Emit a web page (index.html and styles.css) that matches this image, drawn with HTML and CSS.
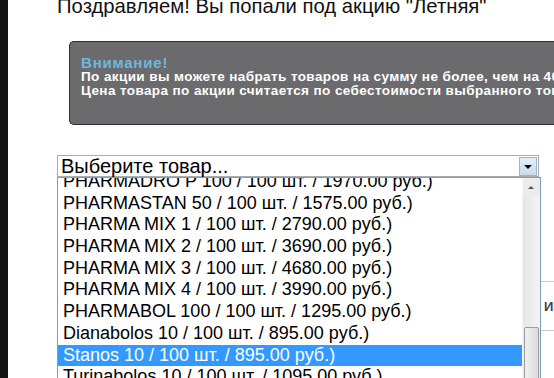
FILE: index.html
```html
<!DOCTYPE html>
<html lang="ru">
<head>
  <meta charset="UTF-8">
  <title>Акция "Летняя"</title>
  <link rel="stylesheet" href="styles.css">
</head>
<body>
  <div class="page">
    <div class="side"></div>
    <main class="main">
      <h1 class="title">Поздравляем! Вы попали под акцию "Летняя"</h1>

      <div class="notice">
        <div class="notice-head">Внимание!</div>
        <p>По акции вы можете набрать товаров на сумму не более, чем на 4000 руб.</p>
        <p>Цена товара по акции считается по себестоимости выбранного товара.</p>
      </div>

      <div class="picker">
        <div class="select">
          <span>Выберите товар...</span>
          <span class="arrow"></span>
        </div>
        <div class="list">
          <ul class="items">
            <li>PHARMADRO P 100 / 100 шт. / 1970.00 руб.)</li>
            <li>PHARMASTAN 50 / 100 шт. / 1575.00 руб.)</li>
            <li>PHARMA MIX 1 / 100 шт. / 2790.00 руб.)</li>
            <li>PHARMA MIX 2 / 100 шт. / 3690.00 руб.)</li>
            <li>PHARMA MIX 3 / 100 шт. / 4680.00 руб.)</li>
            <li>PHARMA MIX 4 / 100 шт. / 3990.00 руб.)</li>
            <li>PHARMABOL 100 / 100 шт. / 1295.00 руб.)</li>
            <li>Dianabolos 10 / 100 шт. / 895.00 руб.)</li>
            <li class="active">Stanos 10 / 100 шт. / 895.00 руб.)</li>
            <li>Turinabolos 10 / 100 шт. / 1095.00 руб.)</li>
          </ul>
          <div class="scroll">
            <div class="scroll-up"></div>
            <div class="scroll-track"></div>
            <div class="scroll-thumb"></div>
          </div>
        </div>
      </div>

      <table class="cart">
        <tr>
          <td class="cart-name">Товар</td>
          <td class="cart-col">Имя</td>
        </tr>
        <tr>
          <td class="cart-name"></td>
          <td class="cart-col"></td>
        </tr>
      </table>
    </main>
  </div>
</body>
</html>
```

FILE: styles.css
```css
/* основа */
body {
  margin: 0;
  background: #ffffff;
  font-family: 'Liberation Sans', Arial, sans-serif;
  overflow: hidden;
}

.page {
  display: flex;
  height: 378px;
  overflow: hidden;
}

.side {
  width: 8px;
  flex-shrink: 0;
  background: #141414;
}

.main {
  flex: 1;
  padding-left: 49px;
  white-space: nowrap;
  overflow: hidden;
}

.title {
  margin: -6px 0 0;
  font-size: 20.3px;
  line-height: 24px;
  font-weight: normal;
  color: #111;
}

/* блок внимания */
.notice {
  margin: 23px 0 0 12px;
  height: 84px;
  box-sizing: border-box;
  padding: 14px 11px;
  background: #6b6b6d;
  border: 1px solid #2e2e2e;
  border-radius: 5px 0 0 5px;
  border-right: none;
  color: #ffffff;
  font-size: 13.5px;
  font-weight: bold;
  line-height: 14px;
}

.notice-head {
  color: #6cb8df;
  font-size: 15px;
  letter-spacing: 0.8px;
}

.notice p {
  margin: 0;
  letter-spacing: 0.4px;
}

/* выбор товара */
.picker {
  position: relative;
  margin-top: 30px;
  width: 482px;
}

.select {
  display: flex;
  justify-content: space-between;
  align-items: center;
  height: 22px;
  box-sizing: border-box;
  padding: 0 1px 0 3px;
  border: 1px solid #a5acb2;
  font-size: 20px;
  color: #000;
}

.arrow {
  width: 18px;
  height: 19px;
  box-sizing: border-box;
  border: 1px solid #9ab4cf;
  background: linear-gradient(#e3eef9, #c9dcf0);
  position: relative;
}

.arrow::after {
  content: "";
  position: absolute;
  left: 4px;
  top: 7px;
  border-left: 4px solid transparent;
  border-right: 4px solid transparent;
  border-top: 4px solid #000;
}

.list {
  position: absolute;
  top: 100%;
  left: 0;
  width: 484px;
  height: 210px;
  box-sizing: border-box;
  display: flex;
  background: #fff;
  border: 1px solid #7f9db9;
  overflow: hidden;
}

.items {
  flex: 1;
  list-style: none;
  margin: -7px 0 0;
  padding: 0;
  font-size: 18px;
}

.items li {
  height: 21.7px;
  line-height: 21.7px;
  padding-left: 5px;
  color: #000;
}

.items li.active {
  background: #3399ff;
  color: #fff;
}

.scroll {
  width: 17px;
  display: flex;
  flex-direction: column;
  background: #ececec;
  border-left: 1px solid #f6f6f6;
}

.scroll-up {
  height: 17px;
  position: relative;
}

.scroll-up::after {
  content: "";
  position: absolute;
  left: 5px;
  top: 8px;
  border-left: 3px solid transparent;
  border-right: 3px solid transparent;
  border-bottom: 3px solid #555;
}

.scroll-track {
  height: 132px;
  background: linear-gradient(90deg, #e6e6e6, #f4f4f4);
}

.scroll-thumb {
  flex: 1;
  margin: 0 1px;
  border: 1px solid #9c9c9c;
  border-radius: 2px 2px 0 0;
  background: linear-gradient(90deg, #f0f0f0, #dcdcdc);
}

/* корзина */
.cart {
  margin-top: 104px;
  width: 600px;
  table-layout: fixed;
  border-collapse: collapse;
  font-size: 13px;
  font-weight: bold;
  color: #444;
}

.cart td {
  border-top: 1px solid #c9c9c9;
  height: 48px;
  padding: 0;
}

.cart-name {
  width: 486px;
}

.cart-col {
  padding-left: 1px !important;
}
```
